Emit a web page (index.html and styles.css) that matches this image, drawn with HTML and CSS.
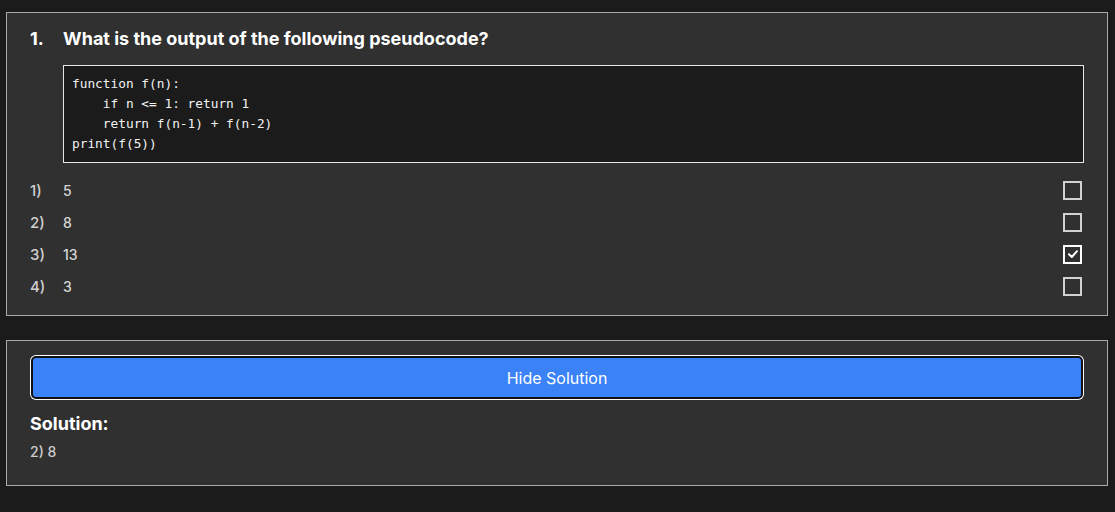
FILE: index.html
```html
<!DOCTYPE html>
<html lang="en">
<head>
<meta charset="utf-8">
<title>Quiz</title>
<link rel="stylesheet" href="styles.css">
</head>
<body>
<section class="card question">
  <h2 class="q-title"><span class="q-num">1.</span><span class="q-text">What is the output of the following pseudocode?</span></h2>
  <pre class="code">function f(n):
    if n &lt;= 1: return 1
    return f(n-1) + f(n-2)
print(f(5))</pre>
  <ul class="options">
    <li class="option"><span class="opt-num">1)</span><span class="opt-text">5</span><span class="box"></span></li>
    <li class="option"><span class="opt-num">2)</span><span class="opt-text">8</span><span class="box"></span></li>
    <li class="option"><span class="opt-num">3)</span><span class="opt-text">13</span><span class="box checked"><svg viewBox="0 0 14 14" width="14" height="14"><path d="M3 7.2 L5.8 10 L11 4.2" fill="none" stroke="#ffffff" stroke-width="2" stroke-linecap="round" stroke-linejoin="round"/></svg></span></li>
    <li class="option"><span class="opt-num">4)</span><span class="opt-text">3</span><span class="box"></span></li>
  </ul>
</section>
<section class="card solution-card">
  <button class="btn">Hide Solution</button>
  <h3 class="sol-title">Solution:</h3>
  <p class="sol-text">2) 8</p>
</section>
</body>
</html>
```
FILE: styles.css
```css
* { box-sizing: border-box; }
html, body { margin: 0; }
body {
  background: #1b1b1b;
  padding: 12px 7px 0 6px;
  font-family: Inter, "Noto Sans", sans-serif;
  color: #ffffff;
  height: 512px;
  overflow: hidden;
}
.card {
  background: #303030;
  border: 1px solid #a9a9a9;
}
.question {
  padding: 16px 23px 13px 23px;
}
.q-title {
  display: flex;
  margin: 0;
  font-size: 18px;
  line-height: 20px;
  font-weight: 700;
  color: #ffffff;
}
.q-num { width: 33px; flex: none; }
.code {
  margin: 16px 0 0 33px;
  background: #1b1b1b;
  border: 1px solid #e6e6e6;
  padding: 8px;
  font-family: "DejaVu Sans Mono", "Liberation Mono", monospace;
  font-size: 12.8px;
  line-height: 20px;
  color: #f2f2f2;
  white-space: pre;
}
.options {
  list-style: none;
  margin: 11px 0 0 0;
  padding: 0;
}
.option {
  display: flex;
  align-items: center;
  height: 32px;
  font-size: 14px;
  font-weight: 500;
  color: #d6d6d6;
}
.opt-num { width: 33px; flex: none; font-size: 15px; color: #cfcfcf; }
.opt-text { flex: 1; }
.box {
  width: 19px;
  height: 19px;
  border: 2px solid #d2d2d2;
  margin-right: 2px;
  display: flex;
  align-items: center;
  justify-content: center;
}
.box.checked { border-color: #ffffff; }
.solution-card {
  margin-top: 24px;
  padding: 15px 23px 23px 23px;
}
.btn {
  display: block;
  height: 43px;
  background: #3b82f6;
  border: 2px solid #111111;
  box-shadow: 0 0 0 1px #ffffff;
  border-radius: 5px;
  color: #ffffff;
  font-family: Inter, "Noto Sans", sans-serif;
  font-size: 16px;
  font-weight: 400;
  padding: 0;
  width: calc(100% - 2px);
  margin-left: 1px;
}
.sol-title {
  margin: 14px 0 0 0;
  font-size: 18px;
  line-height: 22px;
  font-weight: 700;
  color: #ffffff;
}
.sol-text {
  margin: 7px 0 0 0;
  font-size: 14px;
  line-height: 20px;
  font-weight: 500;
  color: #cccccc;
}
```
